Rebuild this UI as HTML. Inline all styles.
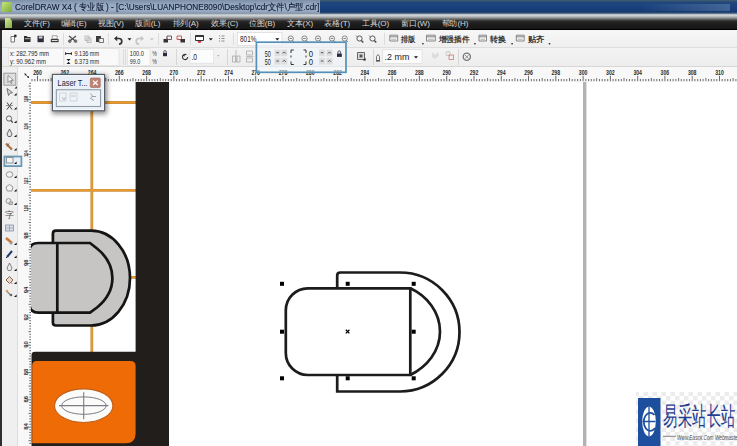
<!DOCTYPE html><html><head><meta charset="utf-8"><style>
*{margin:0;padding:0;box-sizing:border-box}
html,body{width:737px;height:446px;overflow:hidden;background:#fff;font-family:"Liberation Sans",sans-serif}
.a{position:absolute}
.mi{position:absolute;top:17px;font-size:8px;line-height:13px;color:#d8d8d8;white-space:nowrap;letter-spacing:-0.1px}
.pt{position:absolute;font-size:8px;line-height:8px;color:#2a2a2a;white-space:nowrap}
.tt{position:absolute;font-size:8px;line-height:9px;color:#333;white-space:nowrap;font-weight:bold}
svg{position:absolute;overflow:visible}
</style></head><body>
<div class="a" style="left:0;top:0;width:737px;height:14px;background:linear-gradient(#46606c 0,#22487a 2px,#1a4280 6px,#173a70 12px,#3a5878 13px,#7890a0 14px)"></div>
<div class="a" style="left:0;top:0;width:320px;height:14px;background:linear-gradient(#7d90a6,#95a9c2 35%,#9db0c7 70%,#8797aa)"></div>
<div class="a" style="left:2px;top:2px;width:10px;height:10px;background:linear-gradient(135deg,#c8e47a,#7aa83a);border-radius:1px"></div>
<div class="a" style="left:15px;top:1px;font-size:9px;line-height:13px;color:#141e36;white-space:nowrap;transform-origin:0 0;transform:scaleX(0.913);-webkit-text-stroke:0.15px #141e36">CorelDRAW X4 ( 专业版 ) - [C:\Users\LUANPHONE8090\Desktop\cdr文件\户型.cdr]</div>
<div class="a" style="left:640px;top:4px;width:90px;height:7px;background:linear-gradient(90deg,rgba(120,150,180,0),rgba(140,170,200,.35))"></div>
<div class="a" style="left:0;top:14px;width:737px;height:16px;background:linear-gradient(#b4bcc2 0,#cdd1d4 1.5px,#b0b2b4 3px,#6a6a6a 5px,#2a2a2a 7px,#1c1c1c 10px,#181818 14px,#101010 16px)"></div>
<div class="a" style="left:0;top:29px;width:737px;height:1px;background:#000"></div>
<div class="a" style="left:5px;top:18px;width:7px;height:10px;background:linear-gradient(135deg,#d8ec9a,#82ac46);clip-path:polygon(0 0,70% 0,100% 30%,100% 100%,0 100%)"></div>
<div class="mi" style="left:24px">文件(F)</div>
<div class="mi" style="left:60.5px">编辑(E)</div>
<div class="mi" style="left:97.7px">视图(V)</div>
<div class="mi" style="left:135px">版面(L)</div>
<div class="mi" style="left:172.5px">排列(A)</div>
<div class="mi" style="left:211.4px">效果(C)</div>
<div class="mi" style="left:249px">位图(B)</div>
<div class="mi" style="left:286.8px">文本(X)</div>
<div class="mi" style="left:324.4px">表格(T)</div>
<div class="mi" style="left:362px">工具(O)</div>
<div class="mi" style="left:401.4px">窗口(W)</div>
<div class="mi" style="left:441.6px">帮助(H)</div>
<div class="a" style="left:0;top:30px;width:737px;height:17px;background:linear-gradient(#f7f7f7,#efefef)"></div>
<div class="a" style="left:0;top:47px;width:737px;height:1px;background:#dedede"></div>
<div class="a" style="left:0;top:48px;width:737px;height:19px;background:linear-gradient(#f3f3f3,#ededed)"></div>
<div class="a" style="left:0;top:66px;width:737px;height:1px;background:#d6d6d6"></div>
<div class="a" style="left:18px;top:67px;width:719px;height:15px;background:#f8f8f8"></div>
<div class="a" style="left:0;top:67px;width:18px;height:379px;background:#efefef"></div>
<div class="a" style="left:17px;top:67px;width:1px;height:379px;background:#dcdcdc"></div>
<div class="a" style="left:18px;top:82px;width:13px;height:364px;background:#f8f8f8"></div>
<div class="a" style="left:31px;top:82px;width:706px;height:364px;background:#fff"></div>
<div class="a" style="left:0;top:30px;width:2px;height:416px;background:#2e2e2e"></div>
<svg style="left:0;top:0" width="737" height="446" viewBox="0 0 737 446"><path d="M32.0 79V81.2 M34.8 79V81.2 M37.5 75.8V81.2 M40.2 79V81.2 M43.0 79V81.2 M45.7 79V81.2 M48.4 79V81.2 M51.1 78V81.2 M53.9 79V81.2 M56.6 79V81.2 M59.3 79V81.2 M62.1 79V81.2 M64.8 75.8V81.2 M67.5 79V81.2 M70.2 79V81.2 M73.0 79V81.2 M75.7 79V81.2 M78.4 78V81.2 M81.1 79V81.2 M83.9 79V81.2 M86.6 79V81.2 M89.3 79V81.2 M92.1 75.8V81.2 M94.8 79V81.2 M97.5 79V81.2 M100.2 79V81.2 M103.0 79V81.2 M105.7 78V81.2 M108.4 79V81.2 M111.2 79V81.2 M113.9 79V81.2 M116.6 79V81.2 M119.3 75.8V81.2 M122.1 79V81.2 M124.8 79V81.2 M127.5 79V81.2 M130.3 79V81.2 M133.0 78V81.2 M135.7 79V81.2 M138.4 79V81.2 M141.2 79V81.2 M143.9 79V81.2 M146.6 75.8V81.2 M149.3 79V81.2 M152.1 79V81.2 M154.8 79V81.2 M157.5 79V81.2 M160.3 78V81.2 M163.0 79V81.2 M165.7 79V81.2 M168.4 79V81.2 M171.2 79V81.2 M173.9 75.8V81.2 M176.6 79V81.2 M179.4 79V81.2 M182.1 79V81.2 M184.8 79V81.2 M187.5 78V81.2 M190.3 79V81.2 M193.0 79V81.2 M195.7 79V81.2 M198.5 79V81.2 M201.2 75.8V81.2 M203.9 79V81.2 M206.6 79V81.2 M209.4 79V81.2 M212.1 79V81.2 M214.8 78V81.2 M217.5 79V81.2 M220.3 79V81.2 M223.0 79V81.2 M225.7 79V81.2 M228.5 75.8V81.2 M231.2 79V81.2 M233.9 79V81.2 M236.6 79V81.2 M239.4 79V81.2 M242.1 78V81.2 M244.8 79V81.2 M247.6 79V81.2 M250.3 79V81.2 M253.0 79V81.2 M255.7 75.8V81.2 M258.5 79V81.2 M261.2 79V81.2 M263.9 79V81.2 M266.7 79V81.2 M269.4 78V81.2 M272.1 79V81.2 M274.8 79V81.2 M277.6 79V81.2 M280.3 79V81.2 M283.0 75.8V81.2 M285.7 79V81.2 M288.5 79V81.2 M291.2 79V81.2 M293.9 79V81.2 M296.7 78V81.2 M299.4 79V81.2 M302.1 79V81.2 M304.8 79V81.2 M307.6 79V81.2 M310.3 75.8V81.2 M313.0 79V81.2 M315.8 79V81.2 M318.5 79V81.2 M321.2 79V81.2 M323.9 78V81.2 M326.7 79V81.2 M329.4 79V81.2 M332.1 79V81.2 M334.9 79V81.2 M337.6 75.8V81.2 M340.3 79V81.2 M343.0 79V81.2 M345.8 79V81.2 M348.5 79V81.2 M351.2 78V81.2 M353.9 79V81.2 M356.7 79V81.2 M359.4 79V81.2 M362.1 79V81.2 M364.9 75.8V81.2 M367.6 79V81.2 M370.3 79V81.2 M373.0 79V81.2 M375.8 79V81.2 M378.5 78V81.2 M381.2 79V81.2 M384.0 79V81.2 M386.7 79V81.2 M389.4 79V81.2 M392.1 75.8V81.2 M394.9 79V81.2 M397.6 79V81.2 M400.3 79V81.2 M403.1 79V81.2 M405.8 78V81.2 M408.5 79V81.2 M411.2 79V81.2 M414.0 79V81.2 M416.7 79V81.2 M419.4 75.8V81.2 M422.1 79V81.2 M424.9 79V81.2 M427.6 79V81.2 M430.3 79V81.2 M433.1 78V81.2 M435.8 79V81.2 M438.5 79V81.2 M441.2 79V81.2 M444.0 79V81.2 M446.7 75.8V81.2 M449.4 79V81.2 M452.2 79V81.2 M454.9 79V81.2 M457.6 79V81.2 M460.3 78V81.2 M463.1 79V81.2 M465.8 79V81.2 M468.5 79V81.2 M471.3 79V81.2 M474.0 75.8V81.2 M476.7 79V81.2 M479.4 79V81.2 M482.2 79V81.2 M484.9 79V81.2 M487.6 78V81.2 M490.3 79V81.2 M493.1 79V81.2 M495.8 79V81.2 M498.5 79V81.2 M501.3 75.8V81.2 M504.0 79V81.2 M506.7 79V81.2 M509.4 79V81.2 M512.2 79V81.2 M514.9 78V81.2 M517.6 79V81.2 M520.4 79V81.2 M523.1 79V81.2 M525.8 79V81.2 M528.5 75.8V81.2 M531.3 79V81.2 M534.0 79V81.2 M536.7 79V81.2 M539.5 79V81.2 M542.2 78V81.2 M544.9 79V81.2 M547.6 79V81.2 M550.4 79V81.2 M553.1 79V81.2 M555.8 75.8V81.2 M558.5 79V81.2 M561.3 79V81.2 M564.0 79V81.2 M566.7 79V81.2 M569.5 78V81.2 M572.2 79V81.2 M574.9 79V81.2 M577.6 79V81.2 M580.4 79V81.2 M583.1 75.8V81.2 M585.8 79V81.2 M588.6 79V81.2 M591.3 79V81.2 M594.0 79V81.2 M596.7 78V81.2 M599.5 79V81.2 M602.2 79V81.2 M604.9 79V81.2 M607.7 79V81.2 M610.4 75.8V81.2 M613.1 79V81.2 M615.8 79V81.2 M618.6 79V81.2 M621.3 79V81.2 M624.0 78V81.2 M626.7 79V81.2 M629.5 79V81.2 M632.2 79V81.2 M634.9 79V81.2 M637.7 75.8V81.2 M640.4 79V81.2 M643.1 79V81.2 M645.8 79V81.2 M648.6 79V81.2 M651.3 78V81.2 M654.0 79V81.2 M656.8 79V81.2 M659.5 79V81.2 M662.2 79V81.2 M664.9 75.8V81.2 M667.7 79V81.2 M670.4 79V81.2 M673.1 79V81.2 M675.9 79V81.2 M678.6 78V81.2 M681.3 79V81.2 M684.0 79V81.2 M686.8 79V81.2 M689.5 79V81.2 M692.2 75.8V81.2 M694.9 79V81.2 M697.7 79V81.2 M700.4 79V81.2 M703.1 79V81.2 M705.9 78V81.2 M708.6 79V81.2 M711.3 79V81.2 M714.0 79V81.2 M716.8 79V81.2 M719.5 75.8V81.2 M722.2 79V81.2 M725.0 79V81.2 M727.7 79V81.2 M730.4 79V81.2 M733.1 78V81.2 M735.9 79V81.2" stroke="#4a4a4a" stroke-width="0.8" fill="none"/><text x="37.5" y="74.6" font-size="6.8" font-family="Liberation Sans" font-weight="bold" fill="#2a2a2a" text-anchor="middle" textLength="8.6" lengthAdjust="spacingAndGlyphs">260</text><text x="64.8" y="74.6" font-size="6.8" font-family="Liberation Sans" font-weight="bold" fill="#2a2a2a" text-anchor="middle" textLength="8.6" lengthAdjust="spacingAndGlyphs">262</text><text x="92.1" y="74.6" font-size="6.8" font-family="Liberation Sans" font-weight="bold" fill="#2a2a2a" text-anchor="middle" textLength="8.6" lengthAdjust="spacingAndGlyphs">264</text><text x="119.3" y="74.6" font-size="6.8" font-family="Liberation Sans" font-weight="bold" fill="#2a2a2a" text-anchor="middle" textLength="8.6" lengthAdjust="spacingAndGlyphs">266</text><text x="146.6" y="74.6" font-size="6.8" font-family="Liberation Sans" font-weight="bold" fill="#2a2a2a" text-anchor="middle" textLength="8.6" lengthAdjust="spacingAndGlyphs">268</text><text x="173.9" y="74.6" font-size="6.8" font-family="Liberation Sans" font-weight="bold" fill="#2a2a2a" text-anchor="middle" textLength="8.6" lengthAdjust="spacingAndGlyphs">270</text><text x="201.2" y="74.6" font-size="6.8" font-family="Liberation Sans" font-weight="bold" fill="#2a2a2a" text-anchor="middle" textLength="8.6" lengthAdjust="spacingAndGlyphs">272</text><text x="228.5" y="74.6" font-size="6.8" font-family="Liberation Sans" font-weight="bold" fill="#2a2a2a" text-anchor="middle" textLength="8.6" lengthAdjust="spacingAndGlyphs">274</text><text x="255.7" y="74.6" font-size="6.8" font-family="Liberation Sans" font-weight="bold" fill="#2a2a2a" text-anchor="middle" textLength="8.6" lengthAdjust="spacingAndGlyphs">276</text><text x="283.0" y="74.6" font-size="6.8" font-family="Liberation Sans" font-weight="bold" fill="#2a2a2a" text-anchor="middle" textLength="8.6" lengthAdjust="spacingAndGlyphs">278</text><text x="310.3" y="74.6" font-size="6.8" font-family="Liberation Sans" font-weight="bold" fill="#2a2a2a" text-anchor="middle" textLength="8.6" lengthAdjust="spacingAndGlyphs">280</text><text x="337.6" y="74.6" font-size="6.8" font-family="Liberation Sans" font-weight="bold" fill="#2a2a2a" text-anchor="middle" textLength="8.6" lengthAdjust="spacingAndGlyphs">282</text><text x="364.9" y="74.6" font-size="6.8" font-family="Liberation Sans" font-weight="bold" fill="#2a2a2a" text-anchor="middle" textLength="8.6" lengthAdjust="spacingAndGlyphs">284</text><text x="392.1" y="74.6" font-size="6.8" font-family="Liberation Sans" font-weight="bold" fill="#2a2a2a" text-anchor="middle" textLength="8.6" lengthAdjust="spacingAndGlyphs">286</text><text x="419.4" y="74.6" font-size="6.8" font-family="Liberation Sans" font-weight="bold" fill="#2a2a2a" text-anchor="middle" textLength="8.6" lengthAdjust="spacingAndGlyphs">288</text><text x="446.7" y="74.6" font-size="6.8" font-family="Liberation Sans" font-weight="bold" fill="#2a2a2a" text-anchor="middle" textLength="8.6" lengthAdjust="spacingAndGlyphs">290</text><text x="474.0" y="74.6" font-size="6.8" font-family="Liberation Sans" font-weight="bold" fill="#2a2a2a" text-anchor="middle" textLength="8.6" lengthAdjust="spacingAndGlyphs">292</text><text x="501.3" y="74.6" font-size="6.8" font-family="Liberation Sans" font-weight="bold" fill="#2a2a2a" text-anchor="middle" textLength="8.6" lengthAdjust="spacingAndGlyphs">294</text><text x="528.5" y="74.6" font-size="6.8" font-family="Liberation Sans" font-weight="bold" fill="#2a2a2a" text-anchor="middle" textLength="8.6" lengthAdjust="spacingAndGlyphs">296</text><text x="555.8" y="74.6" font-size="6.8" font-family="Liberation Sans" font-weight="bold" fill="#2a2a2a" text-anchor="middle" textLength="8.6" lengthAdjust="spacingAndGlyphs">298</text><text x="583.1" y="74.6" font-size="6.8" font-family="Liberation Sans" font-weight="bold" fill="#2a2a2a" text-anchor="middle" textLength="8.6" lengthAdjust="spacingAndGlyphs">300</text><text x="610.4" y="74.6" font-size="6.8" font-family="Liberation Sans" font-weight="bold" fill="#2a2a2a" text-anchor="middle" textLength="8.6" lengthAdjust="spacingAndGlyphs">302</text><text x="637.7" y="74.6" font-size="6.8" font-family="Liberation Sans" font-weight="bold" fill="#2a2a2a" text-anchor="middle" textLength="8.6" lengthAdjust="spacingAndGlyphs">304</text><text x="664.9" y="74.6" font-size="6.8" font-family="Liberation Sans" font-weight="bold" fill="#2a2a2a" text-anchor="middle" textLength="8.6" lengthAdjust="spacingAndGlyphs">306</text><text x="692.2" y="74.6" font-size="6.8" font-family="Liberation Sans" font-weight="bold" fill="#2a2a2a" text-anchor="middle" textLength="8.6" lengthAdjust="spacingAndGlyphs">308</text><text x="719.5" y="74.6" font-size="6.8" font-family="Liberation Sans" font-weight="bold" fill="#2a2a2a" text-anchor="middle" textLength="8.6" lengthAdjust="spacingAndGlyphs">310</text><path d="M29.3 443.4H31 M28.5 440.7H31 M29.3 438.0H31 M29.3 435.2H31 M29.3 432.5H31 M29.3 429.8H31 M27 427.1H31 M29.3 424.3H31 M29.3 421.6H31 M29.3 418.9H31 M29.3 416.1H31 M28.5 413.4H31 M29.3 410.7H31 M29.3 408.0H31 M29.3 405.2H31 M29.3 402.5H31 M27 399.8H31 M29.3 397.1H31 M29.3 394.3H31 M29.3 391.6H31 M29.3 388.9H31 M28.5 386.1H31 M29.3 383.4H31 M29.3 380.7H31 M29.3 378.0H31 M29.3 375.2H31 M27 372.5H31 M29.3 369.8H31 M29.3 367.0H31 M29.3 364.3H31 M29.3 361.6H31 M28.5 358.9H31 M29.3 356.1H31 M29.3 353.4H31 M29.3 350.7H31 M29.3 347.9H31 M27 345.2H31 M29.3 342.5H31 M29.3 339.8H31 M29.3 337.0H31 M29.3 334.3H31 M28.5 331.6H31 M29.3 328.9H31 M29.3 326.1H31 M29.3 323.4H31 M29.3 320.7H31 M27 317.9H31 M29.3 315.2H31 M29.3 312.5H31 M29.3 309.8H31 M29.3 307.0H31 M28.5 304.3H31 M29.3 301.6H31 M29.3 298.8H31 M29.3 296.1H31 M29.3 293.4H31 M27 290.7H31 M29.3 287.9H31 M29.3 285.2H31 M29.3 282.5H31 M29.3 279.7H31 M28.5 277.0H31 M29.3 274.3H31 M29.3 271.6H31 M29.3 268.8H31 M29.3 266.1H31 M27 263.4H31 M29.3 260.7H31 M29.3 257.9H31 M29.3 255.2H31 M29.3 252.5H31 M28.5 249.7H31 M29.3 247.0H31 M29.3 244.3H31 M29.3 241.6H31 M29.3 238.8H31 M27 236.1H31 M29.3 233.4H31 M29.3 230.6H31 M29.3 227.9H31 M29.3 225.2H31 M28.5 222.5H31 M29.3 219.7H31 M29.3 217.0H31 M29.3 214.3H31 M29.3 211.5H31 M27 208.8H31 M29.3 206.1H31 M29.3 203.4H31 M29.3 200.6H31 M29.3 197.9H31 M28.5 195.2H31 M29.3 192.5H31 M29.3 189.7H31 M29.3 187.0H31 M29.3 184.3H31 M27 181.5H31 M29.3 178.8H31 M29.3 176.1H31 M29.3 173.4H31 M29.3 170.6H31 M28.5 167.9H31 M29.3 165.2H31 M29.3 162.4H31 M29.3 159.7H31 M29.3 157.0H31 M27 154.3H31 M29.3 151.5H31 M29.3 148.8H31 M29.3 146.1H31 M29.3 143.3H31 M28.5 140.6H31 M29.3 137.9H31 M29.3 135.2H31 M29.3 132.4H31 M29.3 129.7H31 M27 127.0H31 M29.3 124.3H31 M29.3 121.5H31 M29.3 118.8H31 M29.3 116.1H31 M28.5 113.3H31 M29.3 110.6H31 M29.3 107.9H31 M29.3 105.2H31 M29.3 102.4H31 M27 99.7H31 M29.3 97.0H31 M29.3 94.2H31 M29.3 91.5H31 M29.3 88.8H31 M28.5 86.1H31 M29.3 83.3H31" stroke="#4a4a4a" stroke-width="0.8" fill="none"/><text x="0" y="0" font-size="5" font-family="Liberation Sans" font-weight="bold" fill="#333" text-anchor="middle" textLength="6.5" lengthAdjust="spacingAndGlyphs" transform="translate(27.9 426.5) rotate(-90)">84</text><text x="0" y="0" font-size="5" font-family="Liberation Sans" font-weight="bold" fill="#333" text-anchor="middle" textLength="6.5" lengthAdjust="spacingAndGlyphs" transform="translate(27.9 399.2) rotate(-90)">86</text><text x="0" y="0" font-size="5" font-family="Liberation Sans" font-weight="bold" fill="#333" text-anchor="middle" textLength="6.5" lengthAdjust="spacingAndGlyphs" transform="translate(27.9 371.9) rotate(-90)">88</text><text x="0" y="0" font-size="5" font-family="Liberation Sans" font-weight="bold" fill="#333" text-anchor="middle" textLength="6.5" lengthAdjust="spacingAndGlyphs" transform="translate(27.9 344.6) rotate(-90)">90</text><text x="0" y="0" font-size="5" font-family="Liberation Sans" font-weight="bold" fill="#333" text-anchor="middle" textLength="6.5" lengthAdjust="spacingAndGlyphs" transform="translate(27.9 317.3) rotate(-90)">92</text><text x="0" y="0" font-size="5" font-family="Liberation Sans" font-weight="bold" fill="#333" text-anchor="middle" textLength="6.5" lengthAdjust="spacingAndGlyphs" transform="translate(27.9 290.1) rotate(-90)">94</text><text x="0" y="0" font-size="5" font-family="Liberation Sans" font-weight="bold" fill="#333" text-anchor="middle" textLength="6.5" lengthAdjust="spacingAndGlyphs" transform="translate(27.9 262.8) rotate(-90)">96</text><text x="0" y="0" font-size="5" font-family="Liberation Sans" font-weight="bold" fill="#333" text-anchor="middle" textLength="6.5" lengthAdjust="spacingAndGlyphs" transform="translate(27.9 235.5) rotate(-90)">98</text><text x="0" y="0" font-size="5" font-family="Liberation Sans" font-weight="bold" fill="#333" text-anchor="middle" textLength="6.5" lengthAdjust="spacingAndGlyphs" transform="translate(27.9 208.2) rotate(-90)">100</text><text x="0" y="0" font-size="5" font-family="Liberation Sans" font-weight="bold" fill="#333" text-anchor="middle" textLength="6.5" lengthAdjust="spacingAndGlyphs" transform="translate(27.9 180.9) rotate(-90)">102</text><text x="0" y="0" font-size="5" font-family="Liberation Sans" font-weight="bold" fill="#333" text-anchor="middle" textLength="6.5" lengthAdjust="spacingAndGlyphs" transform="translate(27.9 153.7) rotate(-90)">104</text><text x="0" y="0" font-size="5" font-family="Liberation Sans" font-weight="bold" fill="#333" text-anchor="middle" textLength="6.5" lengthAdjust="spacingAndGlyphs" transform="translate(27.9 126.4) rotate(-90)">106</text><text x="0" y="0" font-size="5" font-family="Liberation Sans" font-weight="bold" fill="#333" text-anchor="middle" textLength="6.5" lengthAdjust="spacingAndGlyphs" transform="translate(27.9 99.1) rotate(-90)">108</text></svg>
<div class="a" style="left:31px;top:82px;width:706px;height:364px;overflow:hidden"><svg style="left:0;top:0" width="706" height="364" viewBox="31 82 706 364"><path d="M20 102.5H136 M20 190.3H136 M91.8 70V352 M20 277.3H136" stroke="#c98f42" stroke-width="2.8" fill="none"/><path d="M20 102.5H136 M20 190.3H136 M91.8 70V352 M20 277.3H136" stroke="#ea9c2a" stroke-width="1.5" fill="none"/><path d="M135.6 70H169V450H135.6Z" fill="#211e1c"/><path d="M31.5 355Q31.5 351.7 35 351.7H137V450H31.5Z" fill="#211e1c"/><path d="M32.2 365.5Q32.2 361 36.7 361H130.6Q135.6 361 135.6 366V433.3Q135.6 443.3 125.6 443.3H32.2Z" fill="#ef6b06"/><ellipse cx="83.7" cy="405.7" rx="29.2" ry="16.8" fill="#fbfbfa" stroke="#c45f1a" stroke-width="1.1"/><ellipse cx="83.9" cy="405.6" rx="22.2" ry="8.7" fill="none" stroke="#6c6c76" stroke-width="0.9"/><path d="M83.7 392.3V419.3 M59 405.6H108.4" stroke="#7c7c84" stroke-width="1.1"/><path d="M52.9 233.7Q52.9 230.7 55.9 230.7H91A39 47.4 0 0 1 91 325.5H55.9Q52.9 325.5 52.9 322.5Z" fill="#c6c5c4" stroke="#141414" stroke-width="2.7"/><path d="M29.2 252Q29.2 243 38.5 243H90L97 248.5Q112.4 261 112.4 278Q112.4 295 97 307.5L90 312.6H38.5Q29.2 312.6 29.2 303Z" fill="#c6c5c4" stroke="#141414" stroke-width="2.7"/><path d="M57.3 242.9V313" stroke="#141414" stroke-width="2.7"/><path d="M337.2 391.5V275.5Q337.2 272.5 340.2 272.5H400A59.5 59.5 0 0 1 400 391.5Z" fill="none" stroke="#1c1c1c" stroke-width="2.7"/><path d="M307.8 288.3H410.3V375H307.8A22 22 0 0 1 285.8 353V310.3A22 22 0 0 1 307.8 288.3Z" fill="#fff" stroke="#1c1c1c" stroke-width="2.7"/><path d="M410.3 288.3C427 296 440 312 440 331.6C440 351 427 367 410.3 375" fill="none" stroke="#1c1c1c" stroke-width="2.7"/><rect x="280.0" y="281.8" width="4" height="4" fill="#000"/><rect x="280.0" y="329.7" width="4" height="4" fill="#000"/><rect x="280.0" y="376.3" width="4" height="4" fill="#000"/><rect x="345.7" y="281.8" width="4" height="4" fill="#000"/><rect x="345.7" y="376.3" width="4" height="4" fill="#000"/><rect x="411.7" y="281.8" width="4" height="4" fill="#000"/><rect x="411.7" y="329.7" width="4" height="4" fill="#000"/><rect x="411.7" y="376.3" width="4" height="4" fill="#000"/><path d="M345.8 329.8L349.4 333.4M349.4 329.8L345.8 333.4" stroke="#000" stroke-width="1.3"/><rect x="583" y="70" width="3.4" height="380" fill="#b3b3b3"/></svg></div>
<svg style="left:0;top:0" width="737" height="446" viewBox="0 0 737 446"><path d="M11 36.5h3.5v5.5h-3.5z" fill="#fff" stroke="#6a6a6a" stroke-width="0.9"/><circle cx="15.3" cy="36" r="1.4" fill="#333"/><path d="M24 36h2.5l1 1h3v5h-6.5z" fill="#2c2c2c"/><path d="M24.8 38.2h5v1h-5z" fill="#bbb"/><path d="M37.5 35.8h6.3v6.4h-6.3z" fill="#2a2d38"/><path d="M38.8 36.3h3.7v2.2h-3.7z" fill="#cfd2da"/><path d="M52.2 35.8h5v3h-5z" fill="#fff" stroke="#777" stroke-width="0.7"/><path d="M50.8 39h7.8v3.2h-7.8z" fill="#3a3a3a"/><path d="M51.8 40h5.8v1h-5.8z" fill="#ddd"/><path d="M63.5 33V45" stroke="#dcdcdc" stroke-width="1"/><path d="M69 36l7 5.5M76 36l-7 5.5" stroke="#4a4a4a" stroke-width="1.2"/><circle cx="69.8" cy="41.2" r="1.3" fill="none" stroke="#4a4a4a" stroke-width="0.9"/><circle cx="75.6" cy="41.2" r="1.3" fill="none" stroke="#4a4a4a" stroke-width="0.9"/><path d="M85 36h4v4.5h-4zM87 38h4v4.5h-4z" fill="#e6e6e6" stroke="#b4b4b4" stroke-width="0.8"/><path d="M96 36h5v6h-5z" fill="#3a3a3a"/><path d="M99 38.5h4.5v4h-4.5z" fill="#f2f2f2" stroke="#555" stroke-width="0.8"/><path d="M108.5 33V45" stroke="#dcdcdc" stroke-width="1"/><path d="M115.5 38.5h3.5a2.8 2.8 0 0 1 0 5.6" fill="none" stroke="#333" stroke-width="1.7"/><path d="M114 38.5l3.2-2.8v5.6z" fill="#333"/><path d="M127.5 38.3h4l-2 2.2z" fill="#1a1a1a"/><path d="M142.5 38.5h-3.5a2.8 2.8 0 0 0 0 5.6" fill="none" stroke="#c4c4c4" stroke-width="1.7"/><path d="M144 38.5l-3.2-2.8v5.6z" fill="#c4c4c4"/><path d="M149.8 38.3h4l-2 2.2z" fill="#c8c8c8"/><path d="M158.5 33V45" stroke="#dcdcdc" stroke-width="1"/><path d="M163.5 39h4.5v3.5h-4.5z" fill="#333"/><path d="M167 36h4.5v3.5h-4.5z" fill="none" stroke="#555" stroke-width="0.9"/><path d="M166 37.5l2 1.5" stroke="#c33" stroke-width="0.8"/><path d="M177 36h4.5v3.5h-4.5z" fill="none" stroke="#b55" stroke-width="0.9"/><path d="M180.5 39h4.5v3.5h-4.5z" fill="#333"/><path d="M178.5 39l2.5 1.5" stroke="#c33" stroke-width="0.8"/><path d="M190.5 33V45" stroke="#dcdcdc" stroke-width="1"/><path d="M195.5 35.5h8v5h-8z" fill="#fff" stroke="#333" stroke-width="1"/><path d="M195.5 35.5h8v1.5h-8z" fill="#333"/><path d="M197.5 41h4l-1 2h-2z" fill="#c44"/><path d="M208.8 38.3h4l-2 2.2z" fill="#1a1a1a"/><path d="M219 36h1.2M221.5 36h3M219 38.5h1.2M221.5 38.5h3M219 41h1.2M221.5 41h3" stroke="#8a8a8a" stroke-width="1.1"/><path d="M233.5 33V45" stroke="#dcdcdc" stroke-width="1"/><rect x="237.5" y="32.5" width="44.5" height="13" fill="#fff" stroke="#e2e2e2" stroke-width="1"/><text x="240" y="41.8" font-size="8.5" font-family="Liberation Sans" fill="#222" textLength="16.4" lengthAdjust="spacingAndGlyphs">801%</text><path d="M275.3 38.2h4l-2 2.2z" fill="#111"/><circle cx="290.8" cy="38.5" r="2.6" fill="#f4f4f4" stroke="#7a7a7a" stroke-width="0.9"/><path d="M289.5 38.5h2.6" stroke="#555" stroke-width="0.7"/><path d="M292.6 40.5l1.2 1.4" stroke="#666" stroke-width="1"/><circle cx="304.5" cy="38.5" r="2.6" fill="#f4f4f4" stroke="#7a7a7a" stroke-width="0.9"/><path d="M303.2 38.5h2.6" stroke="#555" stroke-width="0.7"/><path d="M306.3 40.5l1.2 1.4" stroke="#666" stroke-width="1"/><circle cx="318" cy="38.5" r="2.6" fill="#f4f4f4" stroke="#7a7a7a" stroke-width="0.9"/><path d="M316.7 38.5h2.6" stroke="#555" stroke-width="0.7"/><path d="M319.8 40.5l1.2 1.4" stroke="#666" stroke-width="1"/><circle cx="332" cy="38.5" r="2.6" fill="#f4f4f4" stroke="#7a7a7a" stroke-width="0.9"/><path d="M330.7 38.5h2.6" stroke="#555" stroke-width="0.7"/><path d="M333.8 40.5l1.2 1.4" stroke="#666" stroke-width="1"/><circle cx="344.7" cy="38.5" r="2.6" fill="#f4f4f4" stroke="#7a7a7a" stroke-width="0.9"/><path d="M343.4 38.5h2.6" stroke="#555" stroke-width="0.7"/><path d="M346.5 40.5l1.2 1.4" stroke="#666" stroke-width="1"/><circle cx="359.5" cy="38.5" r="2.6" fill="#f6f6f6" stroke="#555" stroke-width="1"/><path d="M361.3 40.5l2 2" stroke="#444" stroke-width="1.3"/><path d="M356.0 35.5l1.5 1.5" stroke="#666" stroke-width="0.8"/><circle cx="372.5" cy="38.5" r="2.6" fill="#f6f6f6" stroke="#555" stroke-width="1"/><path d="M374.3 40.5l2 2" stroke="#444" stroke-width="1.3"/><path d="M369.0 35.5l1.5 1.5" stroke="#666" stroke-width="0.8"/><path d="M384.5 33V45" stroke="#dcdcdc" stroke-width="1"/><path d="M389.8 35.2h7.9v5.8h-7.9z" fill="#f4f4f4" stroke="#7a7a7a" stroke-width="0.9"/><path d="M389.8 36.8h7.9" stroke="#888" stroke-width="1"/><path d="M391.3 39.3h4.9" stroke="#aaa" stroke-width="0.8"/><text x="401.2" y="41.5" font-size="8" font-family="Liberation Sans" fill="#333" font-weight="bold" textLength="14.5" lengthAdjust="spacingAndGlyphs">排版</text><path d="M426.5 35.2h8.8v5.8h-8.8z" fill="#f4f4f4" stroke="#7a7a7a" stroke-width="0.9"/><path d="M426.5 36.8h8.8" stroke="#888" stroke-width="1"/><path d="M428 39.3h5.800000000000001" stroke="#aaa" stroke-width="0.8"/><text x="438.8" y="41.5" font-size="8" font-family="Liberation Sans" fill="#333" font-weight="bold" textLength="30.5" lengthAdjust="spacingAndGlyphs">增强插件</text><path d="M479.0 35.2h7.5v5.8h-7.5z" fill="#f4f4f4" stroke="#7a7a7a" stroke-width="0.9"/><path d="M479.0 36.8h7.5" stroke="#888" stroke-width="1"/><path d="M480.5 39.3h4.5" stroke="#aaa" stroke-width="0.8"/><text x="490.0" y="41.5" font-size="8" font-family="Liberation Sans" fill="#333" font-weight="bold" textLength="16" lengthAdjust="spacingAndGlyphs">转换</text><path d="M516.3 35.2h7.9v5.8h-7.9z" fill="#f4f4f4" stroke="#7a7a7a" stroke-width="0.9"/><path d="M516.3 36.8h7.9" stroke="#888" stroke-width="1"/><path d="M517.8 39.3h4.9" stroke="#aaa" stroke-width="0.8"/><text x="527.6999999999999" y="41.5" font-size="8" font-family="Liberation Sans" fill="#333" font-weight="bold" textLength="16.6" lengthAdjust="spacingAndGlyphs">贴齐</text><rect x="422.2" y="43" width="1.4" height="1.4" fill="#222"/><rect x="474.2" y="43" width="1.4" height="1.4" fill="#222"/><rect x="511.4" y="43" width="1.4" height="1.4" fill="#222"/><rect x="548.8" y="43" width="1.4" height="1.4" fill="#222"/><rect x="8.5" y="48.5" width="55" height="17" fill="#f9f9f9" stroke="#e4e4e4"/><rect x="64" y="48.5" width="55" height="17" fill="#f9f9f9" stroke="#e4e4e4"/><text x="10" y="56.3" font-size="8" font-family="Liberation Sans" fill="#262626" textLength="39" lengthAdjust="spacingAndGlyphs">x: 282.795 mm</text><text x="10" y="64.3" font-size="8" font-family="Liberation Sans" fill="#262626" textLength="36" lengthAdjust="spacingAndGlyphs">y: 90.962 mm</text><path d="M65.8 53.6h5.4" stroke="#222" stroke-width="1"/><path d="M65.6 52.3v2.6M71.4 52.3v2.6" stroke="#222" stroke-width="1"/><path d="M66.5 59h4l-2 2.3zM66.5 64h4l-2-2.3z" fill="#222"/><text x="74.5" y="56.3" font-size="8" font-family="Liberation Sans" fill="#262626" textLength="24.5" lengthAdjust="spacingAndGlyphs">9.136 mm</text><text x="74.5" y="64.3" font-size="8" font-family="Liberation Sans" fill="#262626" textLength="24.5" lengthAdjust="spacingAndGlyphs">6.373 mm</text><path d="M123.5 49v16M125.5 49v16" stroke="#dcdcdc" stroke-width="1"/><rect x="127.5" y="48.5" width="22.5" height="17" fill="#fbfbfb" stroke="#e6e6e6"/><text x="129.8" y="56.3" font-size="8" font-family="Liberation Sans" fill="#262626" textLength="14" lengthAdjust="spacingAndGlyphs">100.0</text><text x="129.8" y="64.3" font-size="8" font-family="Liberation Sans" fill="#262626" textLength="10.5" lengthAdjust="spacingAndGlyphs">99.0</text><text x="152.2" y="56.3" font-size="8" font-family="Liberation Sans" fill="#444" textLength="4.6" lengthAdjust="spacingAndGlyphs">%</text><text x="152.2" y="64.3" font-size="8" font-family="Liberation Sans" fill="#444" textLength="4.6" lengthAdjust="spacingAndGlyphs">%</text><path d="M163 53h4v3.2h-4z" fill="#2a2a3a"/><path d="M163.8 53v-1.2a1.2 1.2 0 0 1 2.4 0V53" fill="none" stroke="#2a2a3a" stroke-width="0.8"/><path d="M176.5 49v16" stroke="#d6d6d6" stroke-width="1"/><path d="M186.5 54.8a2.6 2.6 0 1 0 1.2 2.2" fill="none" stroke="#333" stroke-width="1.1"/><path d="M182 55.5l2.5-1.5 0.3 2.6z" fill="#333"/><rect x="190" y="49.3" width="23.7" height="14" fill="#fcfcfc" stroke="#e4e4e4"/><text x="191.5" y="59.8" font-size="9" font-family="Liberation Sans" fill="#222" textLength="5.6" lengthAdjust="spacingAndGlyphs">.0</text><path d="M216.8 55h3l-1.5 1.8z" fill="#bbb"/><path d="M227.5 49v16" stroke="#d6d6d6" stroke-width="1"/><path d="M236 50v13" stroke="#b0b0b0" stroke-width="0.8"/><path d="M232.5 56h3v6h-3zM237 56h3v6h-3z" fill="none" stroke="#a8a8a8" stroke-width="0.8"/><path d="M246.5 51h6v4h-6zM246.5 58h6v4h-6z" fill="none" stroke="#a8a8a8" stroke-width="0.8"/><path d="M246 56.5h7.5" stroke="#b0b0b0" stroke-width="0.8"/><rect x="256.4" y="42.2" width="89.6" height="30.1" fill="#f2f8fc" fill-opacity="0.5"/><text x="264.8" y="56.6" font-size="8.5" font-family="Liberation Sans" fill="#222" textLength="6.1" lengthAdjust="spacingAndGlyphs">50</text><text x="264.8" y="64.6" font-size="8.5" font-family="Liberation Sans" fill="#222" textLength="6.1" lengthAdjust="spacingAndGlyphs">50</text><text x="308.7" y="56.6" font-size="8.5" font-family="Liberation Sans" fill="#222" textLength="4.3" lengthAdjust="spacingAndGlyphs">0</text><text x="308.7" y="64.6" font-size="8.5" font-family="Liberation Sans" fill="#222" textLength="4.3" lengthAdjust="spacingAndGlyphs">0</text><rect x="274.5" y="49.5" width="6.1" height="6.8" fill="#dedede"/><path d="M276.3 52.7h2.6" stroke="#444" stroke-width="0.9"/><rect x="274.5" y="57.8" width="6.1" height="6.8" fill="#dedede"/><path d="M276.3 61.0h2.6" stroke="#444" stroke-width="0.9"/><rect x="281.2" y="49.5" width="6.1" height="6.8" fill="#dedede"/><path d="M282.8 53.5l1.5-1.6 1.5 1.6" fill="none" stroke="#444" stroke-width="0.9"/><rect x="281.2" y="57.8" width="6.1" height="6.8" fill="#dedede"/><path d="M282.8 61.8l1.5-1.6 1.5 1.6" fill="none" stroke="#444" stroke-width="0.9"/><rect x="319" y="49.5" width="6.1" height="6.8" fill="#dedede"/><path d="M320.8 52.7h2.6" stroke="#444" stroke-width="0.9"/><rect x="319" y="57.8" width="6.1" height="6.8" fill="#dedede"/><path d="M320.8 61.0h2.6" stroke="#444" stroke-width="0.9"/><rect x="326.4" y="49.5" width="6.1" height="6.8" fill="#dedede"/><path d="M328.0 53.5l1.5-1.6 1.5 1.6" fill="none" stroke="#444" stroke-width="0.9"/><rect x="326.4" y="57.8" width="6.1" height="6.8" fill="#dedede"/><path d="M328.0 61.8l1.5-1.6 1.5 1.6" fill="none" stroke="#444" stroke-width="0.9"/><path d="M293.8 50h-2.8v3M291 61.5v3h2.8M303.5 50h2.5v3M306 61.5v3h-2.5M291 55.5v2M306 55.5v2" fill="none" stroke="#333" stroke-width="1"/><path d="M337 53.5h4.8v3.4h-4.8z" fill="#2a2a3a"/><path d="M337.9 53.5v-1.3a1.3 1.3 0 0 1 2.6 0v1.3" fill="none" stroke="#2a2a3a" stroke-width="0.8"/><rect x="256.4" y="42.2" width="89.6" height="30.1" fill="none" stroke="#5590b8" stroke-width="1.7"/><path d="M357.5 52.5h7v7h-7z" fill="#ddd" stroke="#666" stroke-width="1"/><path d="M359.5 54.5h3v3h-3z" fill="#555"/><path d="M363 60.5h2.6v-2.6z" fill="#111"/><path d="M373.5 49v16" stroke="#d6d6d6" stroke-width="1"/><path d="M376.5 60.5v-4l1.5-2 1.5 2v4z" fill="#f2f2f2" stroke="#555" stroke-width="0.8"/><path d="M376 61h4" stroke="#333" stroke-width="1"/><rect x="382.7" y="49.5" width="39.3" height="14" fill="#fcfcfc" stroke="#e4e4e4"/><text x="384.6" y="59.8" font-size="9" font-family="Liberation Sans" fill="#222" textLength="24.7" lengthAdjust="spacingAndGlyphs">.2 mm</text><path d="M414 56.3h4l-2 2.2z" fill="#111"/><path d="M432 52l3 3 3-3 1 4-4 3-3-2z" fill="#dcdcdc"/><path d="M446 51.5h4v4h-4z" fill="#e6e6e6" stroke="#c8c8c8" stroke-width="0.7"/><path d="M449 55h4.5v4.5h-4.5z" fill="none" stroke="#c77" stroke-width="0.8"/><path d="M458.5 49v16" stroke="#d6d6d6" stroke-width="1"/><circle cx="466.8" cy="56.8" r="3.6" fill="#f0f0f0" stroke="#777" stroke-width="1.3"/><path d="M465 55l3.6 3.6M468.6 55L465 58.6" stroke="#888" stroke-width="0.9"/><path d="M24.5 73.5l4 4" stroke="#555" stroke-width="0.8"/><circle cx="25.5" cy="74.5" r="0.9" fill="#333"/><circle cx="28.2" cy="77" r="0.9" fill="#333"/><rect x="3.9" y="73.2" width="11.9" height="12" fill="#dedede" stroke="#9a9a9a" stroke-width="1"/><path d="M8 75.5v7l1.8-1.8 1.3 2.8 1-0.5-1.3-2.6h2.6z" fill="#fff" stroke="#6a6a6a" stroke-width="0.7"/><rect x="4.4" y="156.5" width="17" height="9.6" fill="#e6f0f5" stroke="#6b99b3" stroke-width="1.8"/><path d="M7 88.5l1.5 7 1.6-2.4 2.4-0.4z" fill="#ddd" stroke="#555" stroke-width="0.8"/><path d="M14 95.5h2.6v-2.6z" fill="#111"/><path d="M7 102.5l5 7M12 102.5l-5 7" stroke="#444" stroke-width="1"/><path d="M6 105.5h7" stroke="#777" stroke-width="0.8"/><path d="M14 109.5h2.6v-2.6z" fill="#111"/><circle cx="9" cy="118.5" r="2.6" fill="#f4f4f4" stroke="#555" stroke-width="0.9"/><path d="M10.8 120.5l2 2" stroke="#444" stroke-width="1.2"/><path d="M14 123h2.6v-2.6z" fill="#111"/><path d="M9.5 129l2.5 5-1.2 2.5h-2.6l-1.2-2.5z" fill="#e8e8e8" stroke="#444" stroke-width="0.8"/><path d="M14 137h2.6v-2.6z" fill="#111"/><path d="M6 143.5l6 6" stroke="#b07040" stroke-width="2.2"/><path d="M9 143.5l-2 3" stroke="#666" stroke-width="1"/><path d="M14 150.5h2.6v-2.6z" fill="#111"/><rect x="6.5" y="157.5" width="6.5" height="5.5" fill="#f4f4f4" stroke="#888" stroke-width="0.9"/><path d="M14 164h2.6v-2.6z" fill="#111"/><ellipse cx="9.5" cy="174.5" rx="3.3" ry="2.8" fill="#f4f4f4" stroke="#888" stroke-width="0.9"/><path d="M14 178h2.6v-2.6z" fill="#111"/><path d="M9.5 184.5l3.5 2.5-1.2 4h-4.6l-1.2-4z" fill="#f4f4f4" stroke="#888" stroke-width="0.9"/><path d="M14 191.5h2.6v-2.6z" fill="#111"/><circle cx="8.5" cy="201" r="2.5" fill="#eee" stroke="#888" stroke-width="0.9"/><path d="M9 202h3.5v2.5h-3.5z" fill="#ccc" stroke="#777" stroke-width="0.6"/><path d="M14 205h2.6v-2.6z" fill="#111"/><text x="5" y="218.0" font-size="9" font-family="Liberation Sans" fill="#555">字</text><rect x="5.5" y="225" width="8" height="6" fill="#d8dde6" stroke="#8a94a8" stroke-width="0.8"/><path d="M5.5 228h8M9.5 225v6" stroke="#8a94a8" stroke-width="0.6"/><path d="M6 238l6 5" stroke="#c87a3a" stroke-width="2.6"/><circle cx="11" cy="243" r="1.5" fill="#999"/><path d="M14 245h2.6v-2.6z" fill="#111"/><path d="M12 251l-5 6" stroke="#1a3a6a" stroke-width="2"/><path d="M7 257l-1 1" stroke="#333" stroke-width="1"/><path d="M14 258h2.6v-2.6z" fill="#111"/><path d="M9.5 263l2.5 5-1.2 2.5h-2.6l-1.2-2.5z" fill="#eee" stroke="#666" stroke-width="0.8"/><path d="M14 271h2.6v-2.6z" fill="#111"/><path d="M6 280l3.5-3.5 3.5 3.5-3.5 3.5z" fill="#e8d8c8" stroke="#7a5a3a" stroke-width="0.9"/><path d="M10.5 282.5l2 1" stroke="#c66" stroke-width="1"/><path d="M14 284h2.6v-2.6z" fill="#111"/><path d="M6.5 291l4 4" stroke="#888" stroke-width="1.2"/><circle cx="7" cy="291" r="1.3" fill="#e0a060"/><circle cx="11" cy="295" r="1.3" fill="#666"/><path d="M14 297h2.6v-2.6z" fill="#111"/><path d="M14.6 88.5h2.2v-2.2z" fill="#111"/><defs><filter id="sh" x="-30%" y="-30%" width="160%" height="160%"><feGaussianBlur stdDeviation="2.5"/></filter></defs><rect x="52" y="75" width="55" height="39" fill="#000" fill-opacity="0.45" filter="url(#sh)"/><rect x="52.5" y="74.5" width="52" height="36.2" fill="#e9f0f7" stroke="#555b62" stroke-width="1.2"/><rect x="53.5" y="75.5" width="50" height="34.2" fill="none" stroke="#fafcff" stroke-width="0.8"/><text x="57.6" y="85.6" font-size="9" font-family="Liberation Sans" fill="#1e2430" textLength="30" lengthAdjust="spacingAndGlyphs">Laser T...</text><rect x="90.3" y="78" width="10" height="9.5" fill="#c08272" stroke="#9a6a60" stroke-width="0.6" rx="1"/><path d="M93 80.6l4.6 4.4M97.6 80.6L93 85" stroke="#fff" stroke-width="1.3"/><rect x="56.3" y="89.8" width="44.3" height="16.6" fill="#eef3f7" stroke="#7f8a94" stroke-width="0.9"/><path d="M59.5 93h6.5v8h-6.5z" fill="none" stroke="#c5ccd2" stroke-width="0.8"/><path d="M62 97l2 3 1.5-3" stroke="#aab" stroke-width="0.8" fill="none"/><path d="M70 93h7v8h-7z" fill="none" stroke="#c5ccd2" stroke-width="0.8"/><path d="M71 96h4.5" stroke="#b4bcc4" stroke-width="0.9"/><path d="M90.5 93.5l2 2.5-2 2.5 3.5 2" stroke="#98a0a8" stroke-width="1" fill="none"/><path d="M92 96.5h4" stroke="#98a0a8" stroke-width="1"/><defs><pattern id="ck" x="0" y="0" width="9" height="9" patternUnits="userSpaceOnUse"><rect width="9" height="9" fill="#fff"/><rect width="4.5" height="4.5" fill="#ececec"/><rect x="4.5" y="4.5" width="4.5" height="4.5" fill="#ececec"/></pattern></defs><rect x="636" y="392" width="101" height="54" fill="url(#ck)"/><rect x="638" y="398" width="22.5" height="48" fill="#1d4f9e"/><ellipse cx="649" cy="421.5" rx="6.8" ry="14.8" fill="#fff"/><path d="M642.5 421.5h13M649 407v29" stroke="#1d4f9e" stroke-width="1.3"/><path d="M654.5 415a6.5 9 0 1 0 0.5 13" fill="none" stroke="#1d4f9e" stroke-width="1.8"/><text x="0" y="0" font-size="25" font-family="Liberation Sans" fill="#1f3e92" letter-spacing="0.6" transform="translate(663 425.4) scale(0.58 1.06)">易采站长站</text><path d="M663 436.3h13" stroke="#666" stroke-width="0.8"/><text x="677" y="439.5" font-size="7" font-family="Liberation Sans" fill="#4a4a4a" font-style="italic" textLength="62" lengthAdjust="spacingAndGlyphs">Www.Easck.Com Webmaster</text></svg>
</body></html>
